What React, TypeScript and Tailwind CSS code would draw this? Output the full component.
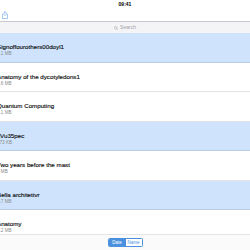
const rows = [
  { title: 'Signoffourothers00doyl1', size: '2.1 MB', selected: true },
  { title: 'Anatomy of the dycotyledons1', size: '3.6 MB', selected: false },
  { title: 'Quantum Computing', size: '1.1 MB', selected: false },
  { title: 'tjVu35pec', size: '873 KB', selected: true },
  { title: 'Two years before the mast', size: '1 MB', selected: false },
  { title: 'Bella architettvr', size: '2.7 MB', selected: true },
  { title: 'Anatomy', size: '9.2 MB', selected: false },
]

export default function App() {
  return (
    <div className="w-[250px] h-[250px] overflow-hidden bg-white flex flex-col font-['Liberation_Sans',Arial,sans-serif]">
      {/* Status bar */}
      <div className="h-[8px] flex items-center justify-center shrink-0">
        <span className="text-[5px] leading-[5px] font-bold text-black">09:41</span>
      </div>

      {/* Toolbar */}
      <div className="h-[13px] flex items-center px-[2px] shrink-0">
        <svg width="6" height="8" viewBox="0 0 6 8" fill="none" stroke="#7fb2ec" strokeWidth="0.7">
          <path d="M3 0.5v4.5M1.6 1.9L3 0.5l1.4 1.4" />
          <path d="M2 3H0.5v4.5h5V3H4" />
        </svg>
      </div>

      {/* Search */}
      <div className="h-[12px] shrink-0 border-t-[1.5px] border-[#c9c9ce] bg-[#f4f4f6] flex items-center justify-center gap-[2px]">
        <svg width="4" height="4" viewBox="0 0 4 4" fill="none" stroke="#a3a3a8" strokeWidth="0.6">
          <circle cx="1.7" cy="1.7" r="1.3" />
          <path d="M2.7 2.7L3.7 3.7" />
        </svg>
        <span className="text-[5px] leading-[5px] text-[#a3a3a8]">Search</span>
      </div>

      {/* List */}
      <div className="flex-1 min-h-0 overflow-hidden">
        {rows.map((row) => (
          <div
            key={row.title}
            className={`h-[29.5px] border-b flex flex-col pt-[10px] ${
              row.selected ? 'bg-[#cfe4fc] border-[#b9cde4]' : 'bg-white border-[#e3e3e6]'
            }`}
          >
            <div className="ml-[-3px] text-[6.2px] leading-[7px] text-[#111] [-webkit-text-stroke:0.15px_#111]">{row.title}</div>
            <div className="ml-[-3px] mt-[1px] text-[4.6px] leading-[6px] text-[#8a8a8e]">{row.size}</div>
          </div>
        ))}
      </div>

      {/* Bottom toolbar */}
      <div className="h-[16px] shrink-0 border-t border-[#e5e5e8] bg-[#fafafa] flex items-center justify-center">
        <div className="flex h-[9px] border border-[#4a90de] rounded-[1.5px] overflow-hidden">
          <div className="w-[17px] bg-[#4a90de] text-white text-[4.5px] leading-[8px] text-center">Date</div>
          <div className="w-[16px] bg-white text-[#4a90de] text-[4.5px] leading-[8px] text-center">Name</div>
        </div>
      </div>
    </div>
  )
}
